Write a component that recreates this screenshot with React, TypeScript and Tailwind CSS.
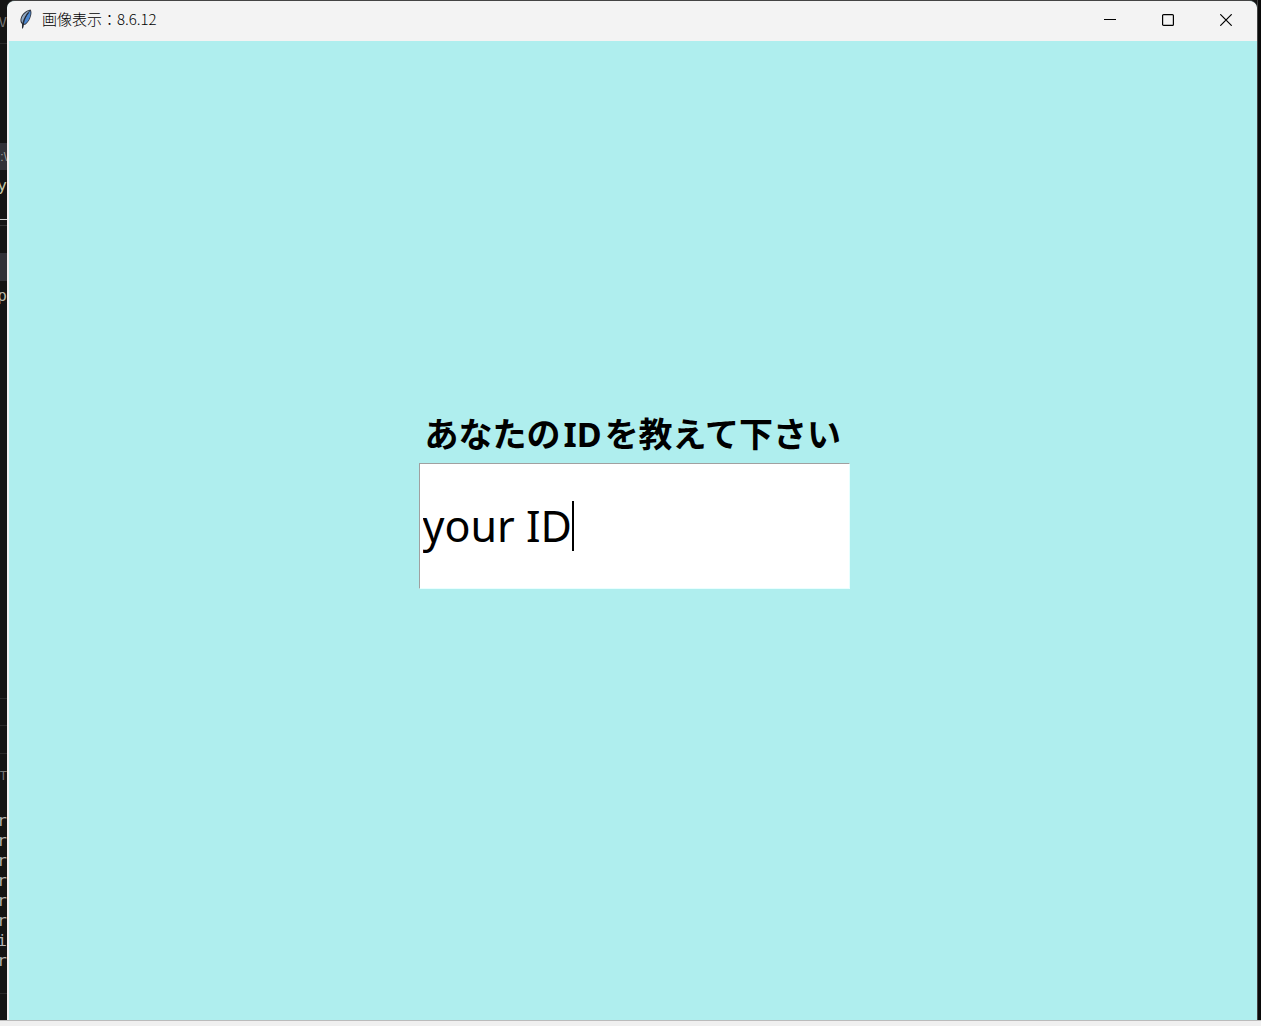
import { useState } from "react";

type Row = { h: string; text?: string; tone?: string };

const editorRows: Row[] = [
  { h: "h-[43px]", text: "V", tone: "text-[#777777] text-sm" },
  { h: "h-px", tone: "bg-[#2a2a2a]" },
  { h: "h-[99px]" },
  { h: "h-[27px]", text: ":\\", tone: "bg-[#323238] text-[#a0a0a0] text-xs font-['Liberation_Sans',sans-serif]" },
  { h: "h-8", text: "py", tone: "text-[#c5c8a8] text-base" },
  { h: "h-[17px]" },
  { h: "h-px", tone: "bg-[#cccccc]" },
  { h: "h-[5px]" },
  { h: "h-px", tone: "bg-[#333333]" },
  { h: "h-[27px]" },
  { h: "h-7", tone: "bg-[#323238]" },
  { h: "h-[30px]", text: "p", tone: "text-[#b8b8a8] text-base" },
  { h: "h-[387px]" },
  { h: "h-px", tone: "bg-[#2a2a2a]" },
  { h: "h-[26px]" },
  { h: "h-px", tone: "bg-[#2a2a2a]" },
  { h: "h-[27px]" },
  { h: "h-px", tone: "bg-[#2a2a2a]" },
  { h: "h-11", text: "UT", tone: "text-[#777777] text-xs" },
  { h: "h-[13px]" },
  { h: "h-5", text: "r", tone: "text-[#b5b5b5] text-base" },
  { h: "h-5", text: "r", tone: "text-[#b5b5b5] text-base" },
  { h: "h-5", text: "r", tone: "text-[#b5b5b5] text-base" },
  { h: "h-5", text: "r", tone: "text-[#b5b5b5] text-base" },
  { h: "h-5", text: "r", tone: "text-[#b5b5b5] text-base" },
  { h: "h-5", text: "r", tone: "text-[#b5b5b5] text-base" },
  { h: "h-5", text: "i", tone: "text-[#b5b5b5] text-base" },
  { h: "h-5", text: "r", tone: "text-[#b5b5b5] text-base" },
  { h: "h-[22px]" },
  { h: "h-px", tone: "bg-[#2a2a2a]" },
];

function EditorEdge() {
  return (
    <div
      aria-hidden="true"
      className="flex w-[7px] shrink-0 flex-col overflow-hidden bg-[#141414] font-['DejaVu_Sans_Mono',monospace]"
    >
      {editorRows.map((row, i) => (
        <div
          key={i}
          className={`flex shrink-0 items-center justify-end overflow-hidden leading-5 ${row.h} ${row.tone ?? ""}`}
        >
          {row.text}
        </div>
      ))}
    </div>
  );
}

function FeatherIcon() {
  return (
    <svg viewBox="0 0 16 20" className="h-5 w-4" aria-hidden="true">
      <path
        d="M12.500 0.500 C13.700 2 13.700 4.500 12.900 7 C12.200 10 10.500 13 7.700 15.500 L5.700 16 L5 19.500 L4 19.500 L4 15 C2.200 13.500 1.900 11 3.100 8 C4.500 4.500 8.300 1.300 12.500 0.500Z"
        fill="#30343c"
      />
      <path
        d="M11.500 1.500 C8.300 2.600 5.400 5.300 4 8.300 C3 10.800 3.200 12.500 4.500 13.900 C5.300 10 8 5 11.500 1.500Z"
        fill="#8fa6c0"
      />
      <path
        d="M12.200 1.800 C13 4.500 12.400 7 11.500 9 C10.600 11.500 9.200 13.400 7.300 14.700 L5.500 14.700 C6.300 10.500 8.600 6 12.200 1.800Z"
        fill="#4a86d0"
      />
      <path d="M10.500 4 C8 7 5.700 11 4.700 18.500" fill="none" stroke="#1b2330" strokeWidth="0.800" />
    </svg>
  );
}

function TitleBar() {
  const button = "flex w-[58px] items-center justify-center";
  return (
    <header className="flex h-10 shrink-0 items-stretch bg-[#f3f3f3] pl-[11px]">
      <div className="flex flex-1 items-center gap-2 pb-1">
        <FeatherIcon />
        <h1 className="text-[15px] leading-5 font-light text-black font-['Noto_Sans_CJK_JP',sans-serif]">
          画像表示：8.6.12
        </h1>
      </div>
      <div className="flex pr-[2px] pb-[2px]">
        <button type="button" aria-label="最小化" className={button}>
          <svg viewBox="0 0 12 12" className="size-3" shapeRendering="crispEdges">
            <path d="M0 5.500H12" stroke="#000" />
          </svg>
        </button>
        <button type="button" aria-label="最大化" className={button}>
          <svg viewBox="0 0 12 12" className="size-3">
            <rect x="0.600" y="0.600" width="10.800" height="10.800" rx="1" fill="none" stroke="#000" strokeWidth="1.200" />
          </svg>
        </button>
        <button type="button" aria-label="閉じる" className={button}>
          <svg viewBox="0 0 12 12" className="size-3">
            <path d="M0.300 0.300L11.700 11.700M11.700 0.300L0.300 11.700" stroke="#000" strokeWidth="1.200" />
          </svg>
        </button>
      </div>
    </header>
  );
}

export default function App() {
  const [id, setId] = useState("your ID");

  return (
    <div className="flex h-screen flex-col overflow-hidden bg-[#141414]">
      <div className="flex min-h-0 flex-1">
        <EditorEdge />
        <div className="flex min-w-0 flex-1 flex-col overflow-hidden rounded-t-lg border-t border-[#444444] bg-[#afeeee]">
          <TitleBar />
          <main className="flex flex-1 flex-col items-center justify-center border-l-2 border-l-[#f0f0f0] pb-[60px] pl-[2px]">
            <div className="flex w-[431px] flex-col">
              <label
                htmlFor="user-id"
                className="mb-2 pl-[6px] text-[34px] leading-[42px] font-bold whitespace-nowrap text-black font-['Noto_Sans','Noto_Sans_CJK_JP',sans-serif]"
              >
                あなたの<span className="mx-[3px]">ID</span>を教えて下さい
              </label>
              <div className="relative">
                <input
                  id="user-id"
                  type="text"
                  value={id}
                  onChange={(e) => setId(e.target.value)}
                  className="block h-[126px] w-full rounded-none border border-t-[#a0a0a0] border-r-[#e8ffff] border-b-[#e8ffff] border-l-[#a0a0a0] bg-white px-[3px] text-[43px] text-black caret-transparent outline-none font-['Noto_Sans',sans-serif]"
                />
                <span
                  aria-hidden="true"
                  className="pointer-events-none absolute top-[38px] left-[153px] h-[50px] w-[2px] bg-black"
                />
              </div>
            </div>
          </main>
        </div>
        <div aria-hidden="true" className="w-1 shrink-0 border-l border-[#444444] bg-[#0a0a0a]" />
      </div>
      <div className="h-[6px] shrink-0 border-t border-[#bbbbbb] bg-[#f0f0f0]" />
    </div>
  );
}
